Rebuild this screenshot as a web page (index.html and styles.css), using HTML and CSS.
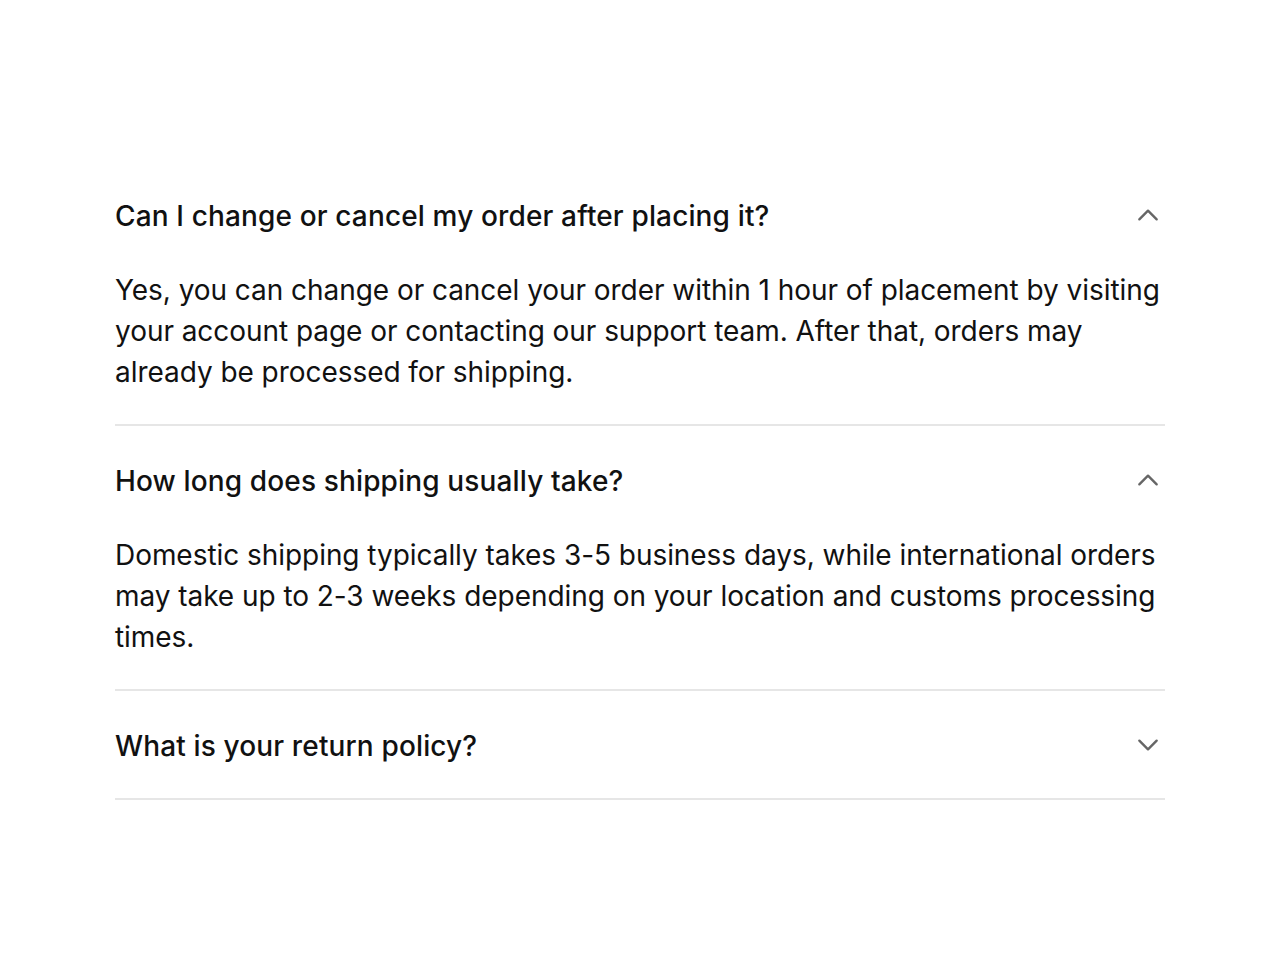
FILE: index.html
```html
<!DOCTYPE html>
<html lang="en">
<head>
<meta charset="utf-8">
<title>FAQ</title>
<link rel="stylesheet" href="styles.css">
</head>
<body>
<main class="page">
  <div class="accordion">
    <div class="item">
      <button class="trigger" type="button">
        <span class="question">Can I change or cancel my order after placing it?</span>
        <svg class="chevron" viewBox="0 0 24 24" width="24" height="24" aria-hidden="true"><path d="M4 16 L12 8 L20 16" /></svg>
      </button>
      <div class="answer">Yes, you can change or cancel your order within 1 hour of placement by visiting your account page or contacting our support team. After that, orders may already be processed for shipping.</div>
    </div>
    <div class="item">
      <button class="trigger" type="button">
        <span class="question">How long does shipping usually take?</span>
        <svg class="chevron" viewBox="0 0 24 24" width="24" height="24" aria-hidden="true"><path d="M4 16 L12 8 L20 16" /></svg>
      </button>
      <div class="answer">Domestic shipping typically takes 3-5 business days, while international orders may take up to 2-3 weeks depending on your location and customs processing times.</div>
    </div>
    <div class="item">
      <button class="trigger" type="button">
        <span class="question">What is your return policy?</span>
        <svg class="chevron" viewBox="0 0 24 24" width="24" height="24" aria-hidden="true"><path d="M4 8 L12 16 L20 8" /></svg>
      </button>
    </div>
  </div>
</main>
</body>
</html>
```

FILE: styles.css
```css
html, body {
  margin: 0;
  padding: 0;
  background: #ffffff;
}

body {
  font-family: Inter, "Noto Sans", "Liberation Sans", sans-serif;
  color: #111111;
}

.page {
  padding: 161px 115px 0 115px;
}

.accordion {
  width: 1050px;
  display: flex;
  flex-direction: column;
}

.item {
  border-bottom: 2px solid #e6e6e6;
}

.trigger {
  width: 100%;
  display: flex;
  align-items: center;
  justify-content: space-between;
  padding: 35px 0 31px 0;
  margin: 0;
  border: 0;
  background: transparent;
  font: inherit;
  color: inherit;
  text-align: left;
  cursor: pointer;
}

.question {
  font-size: 28px;
  line-height: 41px;
  font-weight: 500;
  letter-spacing: 0.14px;
  color: #111111;
}

.chevron {
  width: 26px;
  height: 26px;
  margin: 0 4px 3px 0;
  fill: none;
  stroke: #666666;
  stroke-width: 2.2;
  stroke-linecap: round;
  stroke-linejoin: round;
  flex-shrink: 0;
}

.answer {
  font-size: 28px;
  line-height: 41px;
  font-weight: 400;
  letter-spacing: -0.05px;
  color: #111111;
  padding: 2px 0 31px 0;
}
```
